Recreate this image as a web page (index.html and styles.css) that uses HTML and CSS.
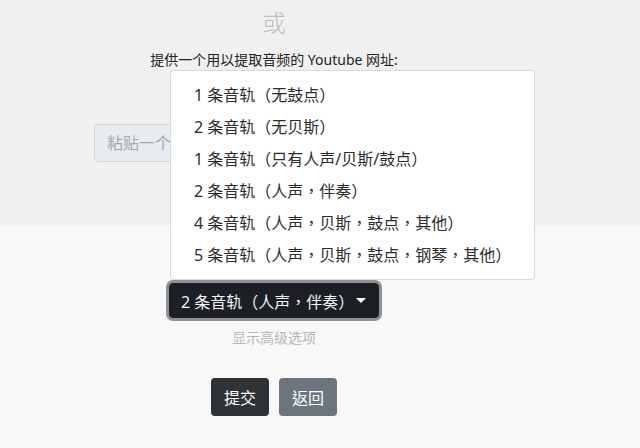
FILE: index.html
```html
<!DOCTYPE html>
<html lang="zh-TW">
<head>
<meta charset="utf-8">
<link rel="stylesheet" href="styles.css">
</head>
<body>
<div class="top">
  <div class="col">
    <div class="or">或</div>
    <div class="label">提供一个用以提取音频的 Youtube 网址:</div>
    <div class="input-row">
      <input class="url-input" type="text" placeholder="粘贴一个 Youtube 网址" disabled>
    </div>
  </div>
</div>
<div class="bottom">
  <div class="col">
    <div class="select-wrap">
      <button class="select-btn" type="button"><span>2 条音轨（人声，伴奏）</span><span class="caret"></span></button>
      <div class="menu">
        <div class="item">1 条音轨（无鼓点）</div>
        <div class="item">2 条音轨（无贝斯）</div>
        <div class="item">1 条音轨（只有人声/贝斯/鼓点）</div>
        <div class="item">2 条音轨（人声，伴奏）</div>
        <div class="item">4 条音轨（人声，贝斯，鼓点，其他）</div>
        <div class="item">5 条音轨（人声，贝斯，鼓点，钢琴，其他）</div>
      </div>
    </div>
    <div class="adv">显示高级选项</div>
    <div class="actions">
      <button class="btn btn-dark" type="button">提交</button>
      <button class="btn btn-gray" type="button">返回</button>
    </div>
  </div>
</div>
</body>
</html>
```
FILE: styles.css
```css
html, body {
  margin: 0;
  padding: 0;
}
body {
  font-family: "Noto Sans", "Noto Sans CJK TC", sans-serif;
  color: #212529;
  background: #f8f8f8;
  width: 640px;
  height: 448px;
  overflow: hidden;
}
.col {
  width: 548px;
  display: flex;
  flex-direction: column;
  align-items: center;
}
.top {
  background: #f0f0f0;
  height: 226px;
}
.or {
  font-size: 24px;
  line-height: 36px;
  font-weight: 300;
  color: #bcbcbc;
  padding-top: 5px;
}
.label {
  font-size: 14px;
  line-height: 20px;
  margin-top: 9px;
  color: #222;
}
.input-row {
  margin-top: 54px;
  width: 360px;
}
.url-input {
  box-sizing: border-box;
  width: 360px;
  height: 38px;
  padding: 6px 12px;
  font-family: inherit;
  font-size: 16px;
  border: 1px solid #d3d8dd;
  border-radius: 4px;
  background: #e9ecef;
  color: #212529;
}
.url-input::placeholder {
  color: #a3a8ad;
}
.bottom {
  padding-top: 54px;
}
.select-wrap {
  position: relative;
}
.select-btn {
  display: flex;
  align-items: center;
  box-sizing: border-box;
  width: 210px;
  height: 35px;
  margin: 3px;
  padding: 0 12px 0 11px;
  font-family: inherit;
  font-size: 16px;
  color: #f4f4f4;
  background: #1c1f23;
  border: 1px solid #1c1f23;
  border-radius: 4px;
  box-shadow: 0 0 0 3px #8f9296;
  white-space: nowrap;
}
.caret {
  display: inline-block;
  margin-left: auto;
  border-top: 5px solid #fff;
  border-left: 5px solid transparent;
  border-right: 5px solid transparent;
}
.menu {
  position: absolute;
  left: 4px;
  bottom: 100%;
  width: 365px;
  box-sizing: border-box;
  padding: 8px 0;
  background: #fff;
  border: 1px solid rgba(0, 0, 0, 0.15);
  border-radius: 4px;
}
.item {
  padding: 4px 23px;
  font-size: 16px;
  line-height: 24px;
  white-space: nowrap;
  color: #2a2d30;
}
.adv {
  margin-top: 7px;
  font-size: 14px;
  line-height: 20px;
  color: #b3b7bb;
}
.actions {
  display: flex;
  gap: 10px;
  margin-top: 30px;
}
.btn {
  height: 38px;
  padding: 0 12px;
  font-family: inherit;
  font-size: 16px;
  color: #fff;
  border-radius: 4px;
  border: 1px solid transparent;
}
.btn-dark {
  background: #2e3338;
}
.btn-gray {
  background: #6c757d;
}
```
